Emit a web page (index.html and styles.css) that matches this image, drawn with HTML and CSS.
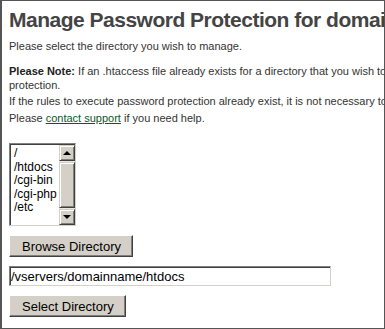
FILE: index.html
```html
<!DOCTYPE HTML>
<html>
	<head>
		<link rel="stylesheet" href="styles.css">
	</head>
	<body>
		<div class="frame">
			<h1 class="title">Manage Password Protection for domainname</h1>
			<p class="intro">Please select the directory you wish to manage.</p>
			<p class="note"><b>Please Note:</b> If an .htaccess file already exists for a directory that you wish to<br>protection.</p>
			<p class="rules">If the rules to execute password protection already exist, it is not necessary to</p>
			<p class="help">Please <a href="#">contact support</a> if you need help.</p>
			<div class="listbox">
				<ul class="items">
					<li>/</li>
					<li>/htdocs</li>
					<li>/cgi-bin</li>
					<li>/cgi-php</li>
					<li>/etc</li>
				</ul>
				<div class="scrollbar">
					<div class="arrow up"><span></span></div>
					<div class="thumb"></div>
					<div class="arrow down"><span></span></div>
				</div>
			</div>
			<div class="row">
				<button class="button browse">Browse Directory</button>
			</div>
			<div class="row">
				<input class="path" type="text" value="/vservers/domainname/htdocs">
			</div>
			<div class="row">
				<button class="button">Select Directory</button>
			</div>
		</div>
	</body>
</html>
```
FILE: styles.css
```css
body {
	margin: 0;
	background: #fff;
	font-family: "Liberation Sans", Arial, sans-serif;
}
.frame {
	box-sizing: border-box;
	width: 385px;
	height: 329px;
	border: solid #555;
	border-width: 1px 1px 1px 2px;
	padding: 7px 0 0 7px;
	overflow: hidden;
	white-space: nowrap;
}
.title {
	margin: 0;
	font-size: 21px;
	line-height: 24px;
	font-weight: bold;
	letter-spacing: -0.5px;
	color: #444;
}
.frame p {
	margin: 0;
	font-size: 11px;
	line-height: 14px;
	color: #333;
}
.frame p b {
	color: #222;
}
.intro {
	padding-top: 7px;
}
.note {
	padding-top: 11px;
}
.rules {
	padding-top: 2px;
}
.help {
	padding-top: 3px;
}
.help a {
	color: #0b5a2a;
	text-decoration: underline;
}
.listbox {
	display: flex;
	width: 67px;
	height: 83px;
	box-sizing: border-box;
	margin-top: 18px;
	border: 1px solid;
	border-color: #808080 #d4d0c8 #d4d0c8 #808080;
	box-shadow: inset 1px 1px #404040;
	background: #fff;
}
.items {
	flex: 1;
	list-style: none;
	margin: 0;
	padding: 3px 0 0 4px;
	font-size: 12px;
	line-height: 13.5px;
	color: #000;
}
.scrollbar {
	display: flex;
	flex-direction: column;
	width: 16px;
	margin: 1px 0 0 0;
	background: #eae8e3;
}
.arrow, .thumb {
	box-sizing: border-box;
	background: #d4d0c8;
	border: 1px solid;
	border-color: #d4d0c8 #404040 #404040 #d4d0c8;
	box-shadow: inset 1px 1px #fff, inset -1px -1px #808080;
}
.arrow {
	height: 16px;
	display: flex;
	align-items: center;
	justify-content: center;
}
.thumb {
	flex: 1;
	margin: 1px 0;
}
.arrow span {
	width: 0;
	height: 0;
	border-left: 4px solid transparent;
	border-right: 4px solid transparent;
}
.up span {
	border-bottom: 4px solid #000;
}
.down span {
	border-top: 4px solid #000;
}
.row {
	display: flex;
	margin-top: 9px;
}
.button {
	height: 22px;
	padding: 0 11px 0 12px;
	font-family: "Liberation Sans", Arial, sans-serif;
	font-size: 13px;
	color: #000;
	background: #d4d0c8;
	border: 1px solid;
	border-color: #fff #404040 #404040 #fff;
	box-shadow: inset -1px -1px #808080;
	border-radius: 0;
}
.path {
	box-sizing: border-box;
	width: 322px;
	height: 20px;
	margin: 0;
	padding: 0 0 0 1px;
	font-family: "Liberation Sans", Arial, sans-serif;
	font-size: 13px;
	color: #000;
	border: 1px solid;
	border-color: #808080 #d4d0c8 #d4d0c8 #808080;
	box-shadow: inset 1px 1px #404040;
	outline: none;
}
```
